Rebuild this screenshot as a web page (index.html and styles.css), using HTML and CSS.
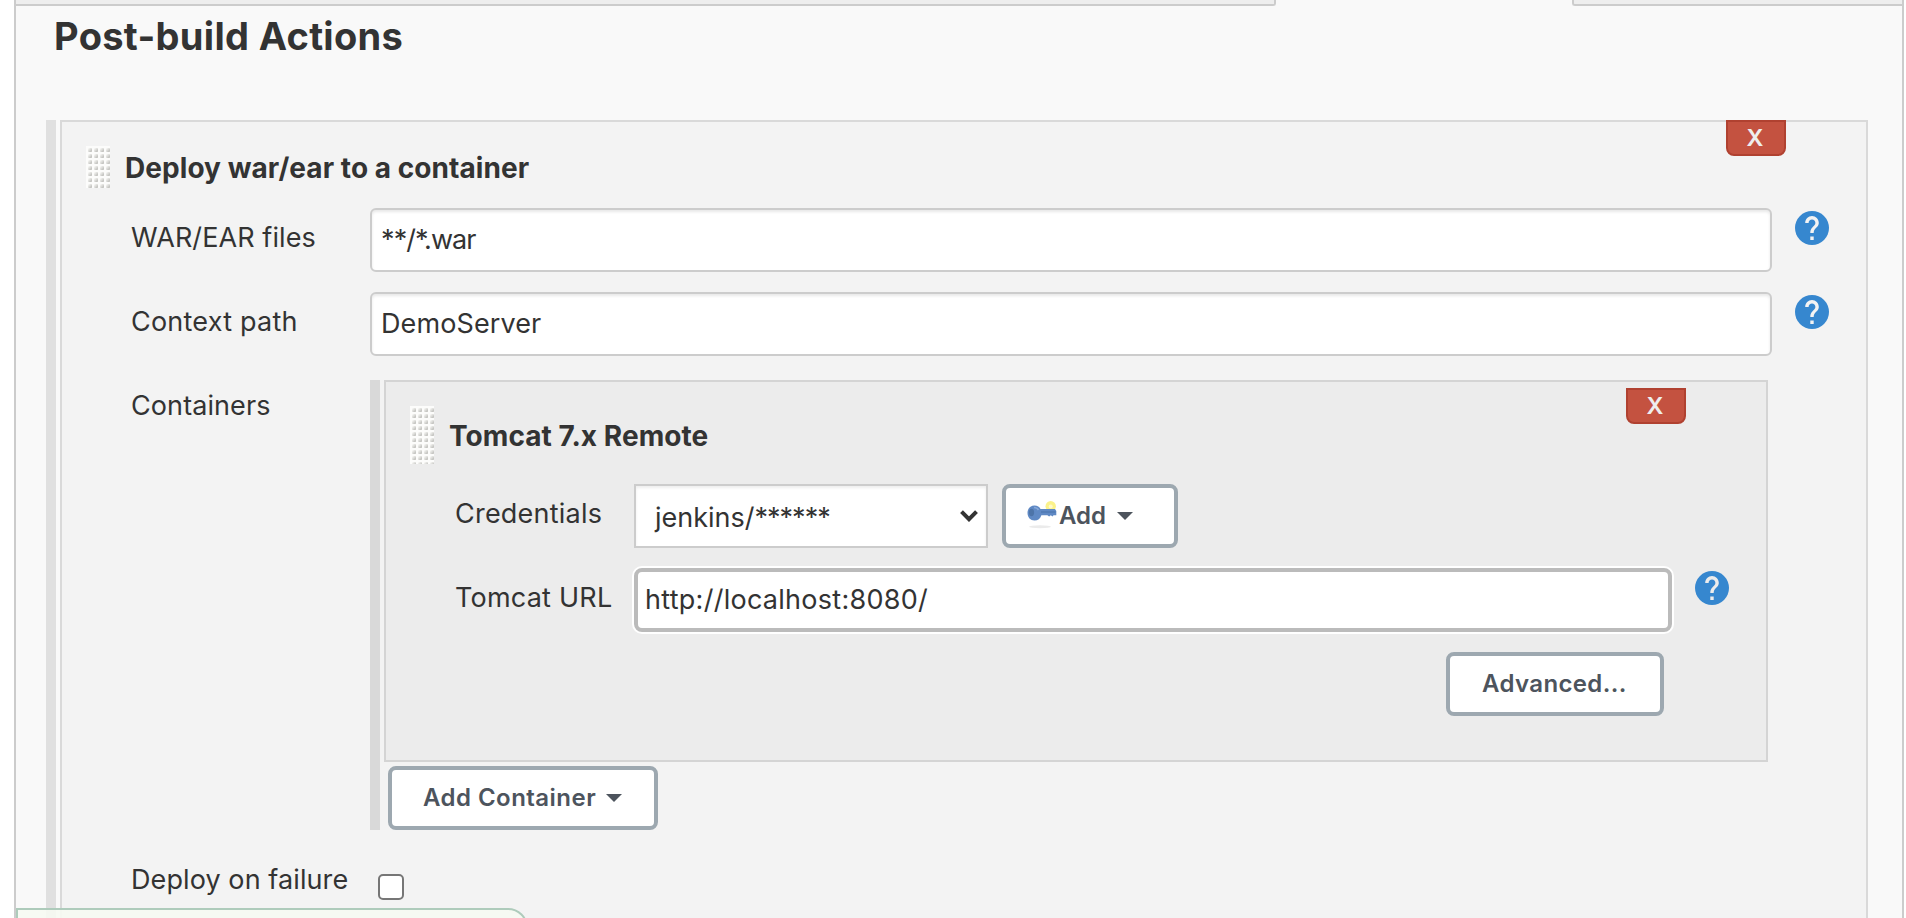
FILE: index.html
```html
<!DOCTYPE html>
<html lang="en">
<head>
<meta charset="utf-8">
<title>Post-build Actions</title>
<link rel="stylesheet" href="styles.css">
</head>
<body>
<svg class="defs" width="0" height="0">
  <symbol id="help" viewBox="2 2 20 20">
    <circle cx="12" cy="12" r="10" fill="#3687cf"/>
    <path fill="currentColor" d="M13 19h-2v-2h2v2zm2.070-7.750l-.9.920C13.450 12.900 13 13.500 13 15h-2v-.5c0-1.100.450-2.100 1.170-2.830l1.240-1.260c.370-.360.590-.860.590-1.410 0-1.100-.9-2-2-2s-2 .9-2 2H8c0-2.210 1.790-4 4-4s4 1.790 4 4c0 .880-.360 1.680-.930 2.250z"/>
  </symbol>
  <symbol id="grip" viewBox="0 0 24 58">
    <defs>
      <linearGradient id="dot" x1="0" y1="0" x2="1" y2="1">
        <stop offset=".15" stop-color="#f4f4f2"/>
        <stop offset="1" stop-color="#b4b4b0"/>
      </linearGradient>
      <pattern id="dots" width="6" height="6" patternUnits="userSpaceOnUse">
        <rect width="6" height="6" fill="#fcfcfb"/>
        <rect x="2" y="2" width="4" height="4" rx="1" fill="url(#dot)"/>
      </pattern>
    </defs>
    <rect width="24" height="58" fill="url(#dots)"/>
  </symbol>
</svg>
<div class="page">
  <div class="tabs"><div class="tab tab-left"></div><div class="tab tab-right"></div></div>
  <h1 class="heading">Post-build Actions</h1>
  <div class="chunk outer">
    <section class="panel">
      <header class="panel-head">
        <div class="handle"><svg width="24" height="58"><use href="#grip"/></svg></div>
        <h2 class="title">Deploy war/ear to a container</h2>
        <button class="close">X</button>
      </header>
      <div class="row">
        <label class="label">WAR/EAR files</label>
        <div class="input input-glob">**/*.war</div>
        <svg class="help"><use href="#help"/></svg>
      </div>
      <div class="row">
        <label class="label label-wide">Context path</label>
        <div class="input">DemoServer</div>
        <svg class="help"><use href="#help"/></svg>
      </div>
      <div class="row row-containers">
        <label class="label">Containers</label>
        <div class="chunk inner">
          <section class="panel panel-inner">
            <header class="panel-head">
              <div class="handle handle-tall"><svg width="24" height="58"><use href="#grip"/></svg></div>
              <h2 class="title">Tomcat 7.x Remote</h2>
              <button class="close">X</button>
            </header>
            <div class="row row-inner">
              <label class="label label-wide">Credentials</label>
              <div class="controls">
                <div class="select"><span>jenkins/<span class="masked">******</span></span>
                  <svg class="chevron" viewBox="0 0 18 12"><path d="M1.500 1.700L9 9.200l7.500-7.500" fill="none" stroke="#333" stroke-width="4"/></svg>
                </div>
                <button class="button button-add">
                  <svg class="key" viewBox="0 0 30 30">
                    <ellipse cx="13" cy="26.700" rx="11" ry="1.500" fill="#ebebeb"/>
                    <circle cx="23.700" cy="6.300" r="5.200" fill="#fbf28a"/>
                    <circle cx="23.700" cy="6.500" r="2" fill="#fffac8"/>
                    <path d="M7.500 5.500c3 0 5 1.300 6 3.500h14.500l1.300 2v4.300H26.500l-1 1.200-1.700-1.200-1.700 1.200-1.700-1.200h-6c-1 3.500-3.500 5.200-6.900 5.200C3.500 20.500.5 17.500.5 13s3-7.500 7-7.500z" fill="#5f89c4"/>
                    <ellipse cx="4.500" cy="12.500" rx="2.600" ry="3.700" fill="#4d74a8"/>
                    <path d="M14 12h14.500" stroke="#4c75b0" stroke-width="1.200"/>
                    <path d="M7 7.500c2 0 3.500.8 4.500 2.500" fill="none" stroke="#86a8d8" stroke-width="1.500"/>
                  </svg>
                  Add<i class="caret"></i>
                </button>
              </div>
            </div>
            <div class="row row-inner">
              <label class="label label-wide">Tomcat URL</label>
              <div class="input input-focus">http://localhost:8080/</div>
              <svg class="help"><use href="#help"/></svg>
            </div>
            <div class="actions"><button class="button button-adv">Advanced...</button></div>
          </section>
          <button class="button button-container">Add Container<i class="caret"></i></button>
        </div>
      </div>
      <div class="row row-failure">
        <label class="label">Deploy on failure</label>
        <i class="checkbox"></i>
      </div>
    </section>
  </div>
  <div class="status"></div>
</div>
</body>
</html>
```
FILE: styles.css
```css
* { box-sizing: border-box; }
body {
  margin: 0;
  height: 918px;
  overflow: hidden;
  background: #fff;
  color: #333;
  font: 27px/60px Inter, "Liberation Sans", sans-serif;
}
button { font: inherit; margin: 0; padding: 0; }
.defs { position: absolute; }
.page {
  position: relative;
  width: 1890px;
  height: 918px;
  margin-left: 14px;
  overflow: hidden;
  background: #f9f9f9;
  border: solid #ccc;
  border-width: 0 2px;
}
.tabs { display: flex; justify-content: space-between; height: 6px; }
.tab { background: #eee; border-bottom: 2px solid #ccc; }
.tab-left { width: 1260px; border-right: 2px solid #ccc; border-bottom-right-radius: 3px; }
.tab-right { width: 330px; border-left: 2px solid #ccc; border-bottom-left-radius: 3px; }
.heading {
  margin: 0;
  padding: 5px 0 0 38px;
  height: 114px;
  font-size: 38px;
  line-height: 50px;
  font-weight: 700;
  letter-spacing: .32px;
}
.chunk { border-left: 10px solid #e0e0e0; }
.outer { width: 1822px; height: 900px; margin-left: 30px; padding-left: 4px; }
.panel { height: 100%; background: #f3f3f3; border: 2px solid #d9d9d9; }
.panel-head { display: flex; height: 86px; padding-left: 24px; }
.handle { flex: none; width: 24px; height: 42px; margin-top: 24px; line-height: 0; overflow: hidden; }
.handle-tall { height: 58px; }
.title {
  flex: 1;
  height: 60px;
  margin: 16px 0 0 15px;
  font-size: 28px;
  line-height: 60px;
  font-weight: 700;
  letter-spacing: .06px;
}
.close {
  width: 60px;
  height: 36px;
  margin: -2px 80px 0 0;
  padding-right: 2px;
  color: #eee;
  font-size: 23.500px;
  line-height: 32px;
  font-weight: 600;
  background: #c45240;
  border: 2px solid #b04130;
  border-radius: 0 0 8px 8px;
}
.row { display: flex; height: 64px; margin-bottom: 20px; padding-left: 69px; }
.label { flex: none; width: 239px; white-space: nowrap; letter-spacing: .09px; }
.label-wide { letter-spacing: .22px; }
.input {
  width: 1402px;
  height: 64px;
  padding-left: 9px;
  letter-spacing: .1px;
  background: #fff;
  border: 2px solid #ccc;
  border-radius: 6px;
  box-shadow: inset 0 2px 3px #e8e8e8;
}
.input-glob { letter-spacing: -.9px; }
.help { flex: none; width: 34px; height: 34px; margin: 3px 0 0 23px; color: #f3f3f3; }
.row-containers { height: 454px; margin: 0 0 20px; }
.inner { width: 1398px; height: 450px; margin-top: 4px; padding-left: 4px; border-color: #d9d9d9; }
.panel-inner { height: 382px; background: #ececec; border-color: #d4d4d4; }
.panel-inner .panel-head { height: 102px; }
.panel-inner .title { margin-top: 24px; }
.panel-inner .close { margin-top: 6px; }
.row-inner .label { width: 179px; }
.controls { display: flex; gap: 14px; }
.select {
  display: flex;
  justify-content: space-between;
  width: 354px;
  height: 64px;
  padding: 2px 8px 0 19px;
  background: #fff;
  border: 2px solid #ccc;
  box-shadow: inset 0 2px 3px #eee;
}
.masked { letter-spacing: -1px; }
.chevron { width: 18px; height: 12px; margin-top: 22px; }
.row-inner .input { width: 1038px; }
.input-focus {
  padding-left: 7px;
  line-height: 56px;
  letter-spacing: .27px;
  border: 4px solid #bbb;
  border-radius: 8px;
  box-shadow: 0 0 0 2px #fff;
}
.row-inner .help { color: #ececec; }
.button {
  display: flex;
  align-items: center;
  height: 64px;
  color: #4d545d;
  font-size: 24px;
  line-height: 56px;
  font-weight: 600;
  background: #fff;
  border: 4px solid #9da8b0;
  border-radius: 8px;
}
.button-add { width: 176px; padding-left: 21px; }
.key { width: 30px; height: 30px; margin: -2px 2px 0 0; }
.caret { margin-left: 11px; border: solid transparent; border-width: 8px 8.500px 0; border-top-color: #4d545d; }
.actions { display: flex; justify-content: flex-end; padding-right: 102px; }
.button-adv { width: 218px; padding-left: 32px; letter-spacing: .36px; }
.button-container { width: 270px; margin: 4px 0 0 4px; padding-left: 31px; letter-spacing: .46px; }
.button-container .caret { margin-left: 10px; border-width: 8px 8px 0; }
.row-failure { margin: 0; }
.checkbox { width: 26px; height: 26px; margin: 24px 0 0 8px; background: #fff; border: 2px solid #767676; border-radius: 5px; }
.status {
  position: absolute;
  left: 0;
  bottom: -30px;
  width: 512px;
  height: 40px;
  background: rgba(246, 250, 242, .9);
  border: 2px solid #aecbbb;
  border-radius: 0 20px 0 0;
}
```
